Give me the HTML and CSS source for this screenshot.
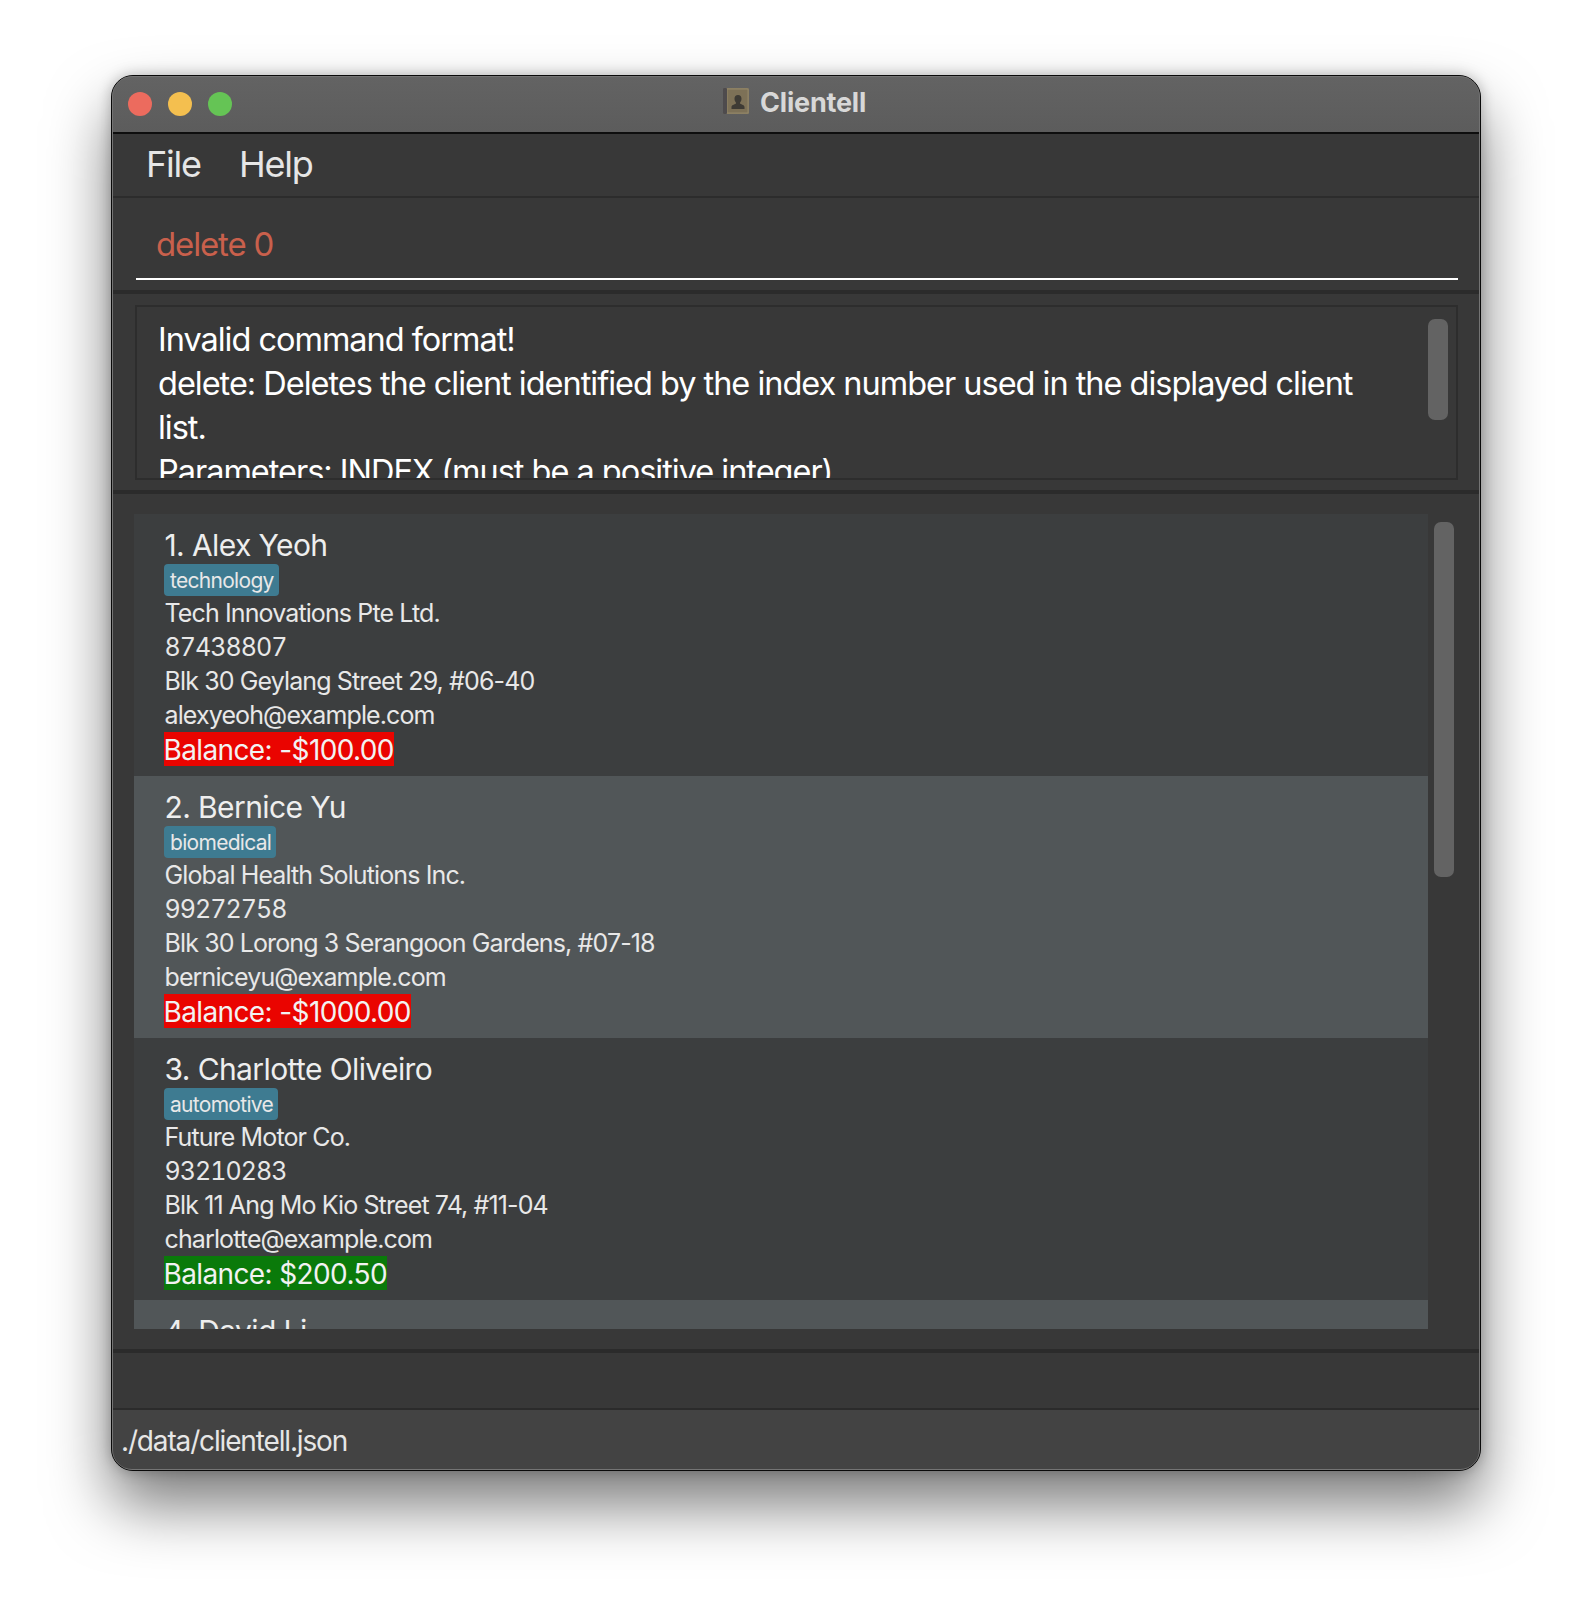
FILE: index.html
```html
<!DOCTYPE html>
<html lang="en">
<head>
<meta charset="utf-8">
<title>Clientell</title>
<link rel="stylesheet" href="styles.css">
</head>
<body>
<div class="window">
  <header class="titlebar">
    <div class="lights"><span class="light red"></span><span class="light yellow"></span><span class="light green"></span></div>
    <div class="title">
      <svg class="app-icon" viewBox="0 0 26 26" width="26" height="26" aria-hidden="true">
        <rect x="0" y="0" width="26" height="26" rx="1.500" fill="#84785c"/>
        <rect x="4" y="1" width="21" height="24" fill="#7d7157" stroke="#93876a" stroke-width="1"/>
        <rect x="0" y="0" width="4" height="26" rx="1" fill="#4e4b4d"/>
        <path d="M15 7c2.300 0 3.500 1.700 3.500 3.800 0 1.600-.7 2.900-1.400 3.600v1.200c0 .8 4.400 1.300 4.400 3.400V21H8.500v-2c0-2.100 4.400-2.600 4.400-3.400v-1.200c-.7-.7-1.400-2-1.400-3.600C11.500 8.700 12.700 7 15 7z" fill="#3e3b35"/>
      </svg>
      <span class="title-text">Clientell</span>
    </div>
  </header>
  <nav class="menubar"><span class="menu-item">File</span><span class="menu-item">Help</span></nav>
  <section class="command"><div class="command-input">delete 0</div></section>
  <section class="result">
    <div class="result-box">
      <div class="result-text">
        <div>Invalid command format!</div>
        <div>delete: Deletes the client identified by the index number used in the displayed client</div>
        <div>list.</div>
        <div>Parameters: INDEX (must be a positive integer)</div>
      </div>
      <div class="scroll-thumb result-thumb"></div>
    </div>
  </section>
  <section class="list">
    <div class="rows">
      <article class="row odd">
        <div class="name">1. Alex Yeoh</div>
        <div class="tags"><span class="tag">technology</span></div>
        <div class="line">Tech Innovations Pte Ltd.</div>
        <div class="line phone">87438807</div>
        <div class="line">Blk 30 Geylang Street 29, #06-40</div>
        <div class="line">alexyeoh@example.com</div>
        <div class="balance-line"><span class="balance neg">Balance: -$100.00</span></div>
      </article>
      <article class="row even">
        <div class="name">2. Bernice Yu</div>
        <div class="tags"><span class="tag">biomedical</span></div>
        <div class="line">Global Health Solutions Inc.</div>
        <div class="line phone">99272758</div>
        <div class="line">Blk 30 Lorong 3 Serangoon Gardens, #07-18</div>
        <div class="line">berniceyu@example.com</div>
        <div class="balance-line"><span class="balance neg">Balance: -$1000.00</span></div>
      </article>
      <article class="row odd">
        <div class="name">3. Charlotte Oliveiro</div>
        <div class="tags"><span class="tag">automotive</span></div>
        <div class="line">Future Motor Co.</div>
        <div class="line phone">93210283</div>
        <div class="line">Blk 11 Ang Mo Kio Street 74, #11-04</div>
        <div class="line">charlotte@example.com</div>
        <div class="balance-line"><span class="balance pos">Balance: $200.50</span></div>
      </article>
      <article class="row even">
        <div class="name">4. David Li</div>
      </article>
    </div>
    <div class="scroll-thumb list-thumb"></div>
  </section>
  <section class="spacer"></section>
  <footer class="status">./data/clientell.json</footer>
</div>
</body>
</html>
```
FILE: styles.css
```css
* { box-sizing: border-box; }
html, body { margin: 0; background: #fff; }
body {
  width: 1592px;
  height: 1618px;
  padding: 75px 111px 0;
  overflow: hidden;
  font-family: "Inter", "Liberation Sans", sans-serif;
  color: #eee;
}
.window {
  width: 1370px;
  height: 1396px;
  background: #383838;
  border: 1.5px solid #0a0a0a;
  border-radius: 22px;
  overflow: hidden;
  display: flex;
  flex-direction: column;
  box-shadow: 0 34px 62px rgba(0, 0, 0, .52), 0 0 14px rgba(0, 0, 0, .25);
  position: relative;
}
.window::after {
  content: "";
  position: absolute;
  inset: 0;
  border-radius: 20px;
  border: 1.5px solid #747474;
  pointer-events: none;
}
.titlebar {
  height: 58px;
  flex: none;
  background: linear-gradient(#636363, #5c5c5c);
  border-bottom: 2px solid #0e0e0e;
  display: flex;
  align-items: center;
  position: relative;
}
.lights { display: flex; gap: 16px; margin-left: 16px; }
.light { width: 24px; height: 24px; border-radius: 50%; }
.red { background: #ec6b5e; }
.yellow { background: #f4bf4f; }
.green { background: #65c455; }
.title {
  position: absolute;
  left: 611px;
  top: 12px;
  display: flex;
  align-items: flex-start;
  gap: 11px;
}
.app-icon { filter: blur(.5px); }
.title-text { font-size: 27px; font-weight: 700; color: #d8d8d8; letter-spacing: -.2px; line-height: 30px; }
.menubar {
  height: 64px;
  flex: none;
  border-bottom: 2px solid #2c2c2c;
  display: flex;
  align-items: center;
  gap: 38px;
  padding: 0 0 2px 34px;
  font-size: 36px;
  letter-spacing: -1.2px;
  color: #e6e6e6;
}
.command {
  height: 96px;
  flex: none;
  border-bottom: 4px solid #2b2b2b;
  padding: 0 22px 0 24px;
}
.command-input {
  height: 82px;
  border-bottom: 2px solid #fff;
  padding: 25px 0 0 20px;
  font-size: 33px;
  letter-spacing: -1.15px;
  line-height: 42px;
  color: #c9604c;
}
.result {
  height: 200px;
  flex: none;
  border-bottom: 4px solid #2b2b2b;
  padding: 11px 22px 10px 23px;
}
.result-box {
  height: 175px;
  border: 2px solid #2d2d2d;
  overflow: hidden;
  position: relative;
  padding: 11px 0 0 22px;
  font-size: 32.5px;
  letter-spacing: -1.02px;
  line-height: 44px;
  color: #fff;
}
.result-text { white-space: nowrap; margin-left: -1px; }
.scroll-thumb { position: absolute; background: #636363; border-radius: 7px; width: 20px; }
.result-thumb { right: 8px; top: 12px; height: 101px; }
.list {
  height: 859px;
  flex: none;
  border-bottom: 4px solid #2b2b2b;
  padding: 20px 52.5px 0 21.5px;
  position: relative;
}
.rows { height: 815px; overflow: hidden; }
.list-thumb { left: 1322px; top: 28px; height: 355px; }
.row { height: 262px; padding: 12px 0 0 30px; }
.odd { background: #3c3e3f; }
.even { background: #515658; }
.name { font-size: 30px; letter-spacing: -.6px; line-height: 38px; color: #eee; padding-left: 1px; }
.tags { height: 32px; }
.tag {
  display: inline-block;
  height: 32px;
  padding: 1px 5px 0 6.5px;
  border-radius: 4px;
  background: #3e7b91;
  color: #e8e8e8;
  font-size: 21px;
  letter-spacing: -.7px;
  line-height: 32px;
}
.line { font-size: 25px; letter-spacing: -.88px; line-height: 34px; color: #e8e8e8; padding-left: 1px; }
.phone { font-variant-numeric: tabular-nums; letter-spacing: -.95px; }
.balance-line { height: 34px; }
.balance { display: inline-block; height: 34px; padding-top: 2px; font-size: 28px; letter-spacing: -.62px; line-height: 32px; color: #f2f2f2; }
.neg { background: #ea0400; }
.pos { background: #0a7a0a; }
.spacer { height: 57px; flex: none; border-bottom: 2px solid #2b2b2b; }
.status {
  flex: 1;
  background: #434343;
  padding: 11px 0 0 9px;
  font-size: 28px;
  letter-spacing: -1.15px;
  line-height: 40px;
  color: #e6e6e6;
}
```
